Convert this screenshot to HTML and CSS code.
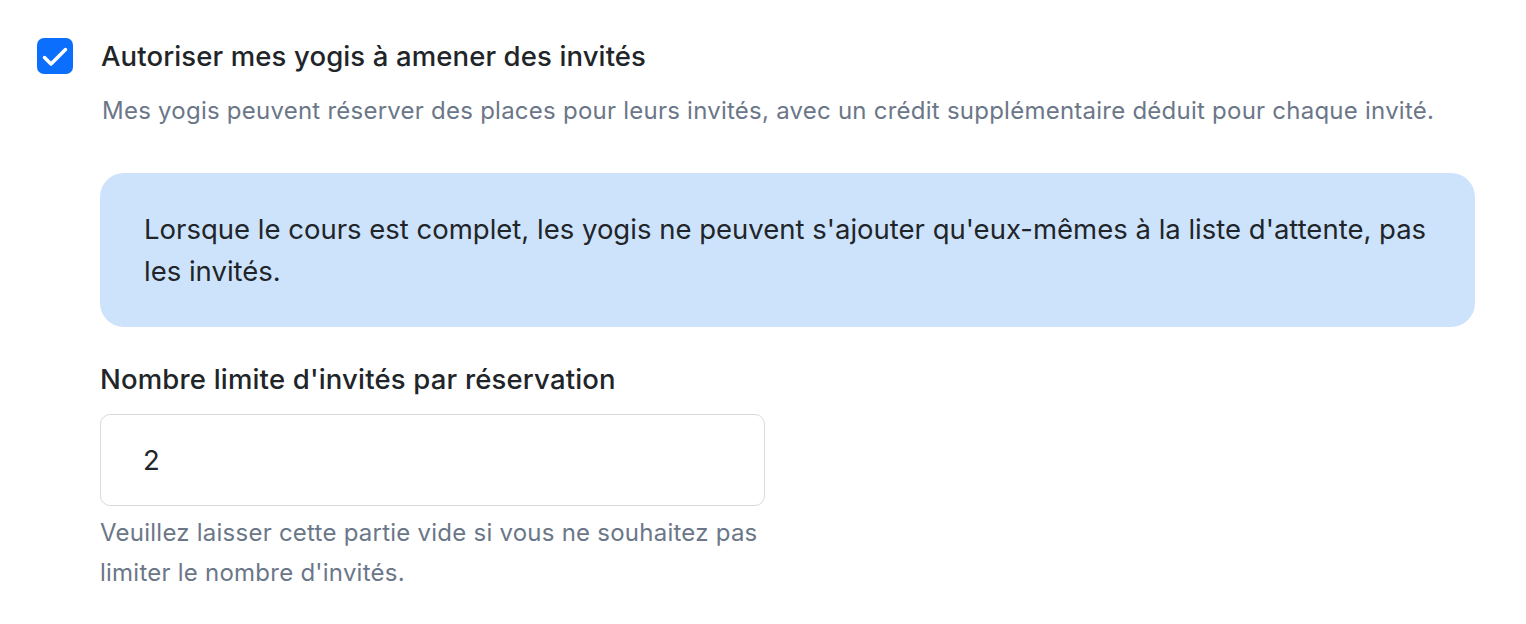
FILE: index.html
```html
<!DOCTYPE html>
<html lang="fr">
<head>
    <meta charset="UTF-8">
    <meta name="viewport" content="width=device-width, initial-scale=1.0">
    <title>Invités</title>
    <link rel="stylesheet" href="styles.css">
</head>
<body>
    <div class="settings">
        <label class="check-row" for="allow_guests">
            <input type="checkbox" id="allow_guests" class="check-input" checked>
            <span class="check-box">
                <svg viewBox="0 0 36 36" width="36" height="36" fill="none" stroke="#fff" stroke-width="3.5" stroke-linecap="round" stroke-linejoin="round">
                    <path d="M7.5 19.5L14 26L28.5 11.5"/>
                </svg>
            </span>
            <span class="check-title">Autoriser mes yogis à amener des invités</span>
        </label>

        <div class="guest-options">
            <p class="check-desc">Mes yogis peuvent réserver des places pour leurs invités, avec un crédit supplémentaire déduit pour chaque invité.</p>

            <div class="info-box">
                Lorsque le cours est complet, les yogis ne peuvent s'ajouter qu'eux-mêmes à la liste d'attente, pas les invités.
            </div>

            <div class="field">
                <label for="guest_limit" class="field-label">Nombre limite d'invités par réservation</label>
                <input type="text" id="guest_limit" name="guest_limit" class="field-input" value="2">
                <p class="field-help">Veuillez laisser cette partie vide si vous ne souhaitez pas limiter le nombre d'invités.</p>
            </div>
        </div>
    </div>
</body>
</html>
```

FILE: styles.css
```css
body {
    margin: 0;
    background-color: #ffffff;
    font-family: Inter, "Noto Sans", sans-serif;
    color: #212529;
}
.settings {
    padding: 38px 37px 0 37px;
}
.check-row {
    display: flex;
    align-items: center;
    gap: 28px;
    cursor: pointer;
}
.check-input {
    display: none;
}
.check-box {
    width: 36px;
    height: 36px;
    border-radius: 7px;
    background-color: #0b6efd;
    display: flex;
    flex-shrink: 0;
}
.check-title {
    font-size: 27.5px;
    font-weight: 500;
    letter-spacing: 0.12px;
    line-height: 36px;
}
.guest-options {
    padding-left: 63px;
}
.check-desc {
    margin: 21px 0 0 2px;
    font-size: 24px;
    letter-spacing: 0.24px;
    line-height: 32px;
    color: #6b7788;
}
.info-box {
    margin-top: 46px;
    margin-right: 14px;
    background-color: #cde3fc;
    border-radius: 24px;
    padding: 35px 44px;
    font-size: 27.5px;
    line-height: 42px;
}
.field {
    margin-top: 34px;
    width: 665px;
}
.field-label {
    display: block;
    font-size: 27.5px;
    font-weight: 500;
    letter-spacing: 0.18px;
    line-height: 36px;
}
.field-input {
    display: block;
    box-sizing: border-box;
    width: 100%;
    height: 92px;
    margin-top: 17px;
    padding: 0 42px;
    border: 1px solid #d6d9de;
    border-radius: 10px;
    font-family: inherit;
    font-size: 27.5px;
    color: #212529;
    outline: none;
}
.field-help {
    margin: 7px 0 0 0;
    font-size: 24px;
    letter-spacing: 0.24px;
    line-height: 40px;
    color: #6b7788;
}
```
